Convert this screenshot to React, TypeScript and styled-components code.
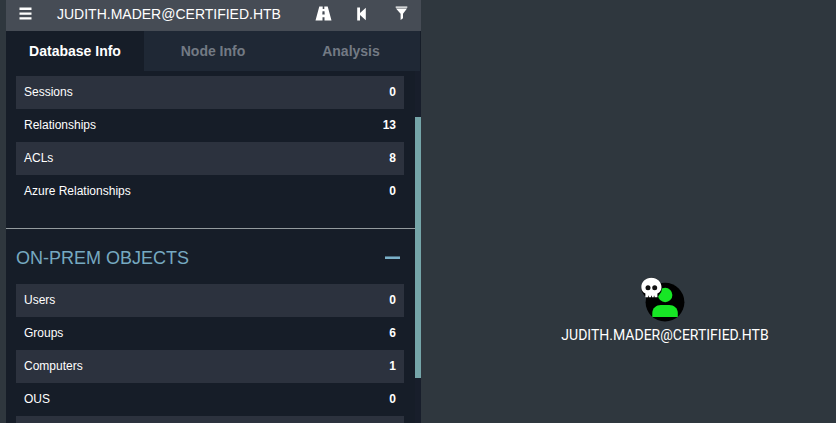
import React from "react";
import styled, { createGlobalStyle } from "styled-components";

const GlobalStyle = createGlobalStyle`
  * { box-sizing: border-box; }
  body {
    margin: 0;
    overflow: hidden;
    background: #2f373e;
    font-family: "Liberation Sans", Arial, sans-serif;
    color: #fff;
  }
`;

const Screen = styled.div`
  display: flex;
  width: 836px;
  height: 423px;
  padding-left: 6px;
  overflow: hidden;
  background: #2f373e;
`;

const Panel = styled.aside`
  display: flex;
  flex-direction: column;
  width: 415px;
  height: 423px;
  overflow: hidden;
  background: #161d28;
`;

const SearchBar = styled.header`
  display: flex;
  flex: none;
  align-items: center;
  height: 31px;
  padding: 0 13px 4px 13px;
  background: #464c55;
`;

const SearchText = styled.span`
  flex: 1;
  padding-left: 25px;
  font-size: 14px;
  line-height: 20px;
  white-space: nowrap;
`;

const Actions = styled.div`
  display: flex;
  align-items: center;
`;

const Icon = styled.svg<{ $gap?: number }>`
  display: block;
  flex: none;
  margin-left: ${(p) => p.$gap ?? 0}px;
  fill: #fff;
`;

const Tabs = styled.nav`
  display: grid;
  flex: none;
  grid-template-columns: repeat(3, 138px);
  height: 40px;
`;

const Tab = styled.div<{ $active?: boolean }>`
  display: flex;
  align-items: center;
  justify-content: center;
  font-size: 14px;
  font-weight: bold;
  color: ${(p) => (p.$active ? "#fff" : "#737a84")};
  background: ${(p) => (p.$active ? "#161d28" : "#1f2835")};
`;

const Body = styled.div`
  display: flex;
  flex: 1;
  min-height: 0;
`;

const Content = styled.div`
  flex: 1;
  padding-top: 5px;
  overflow: hidden;
`;

const Rows = styled.div`
  margin: 0 11px 0 10px;
`;

const Row = styled.div`
  display: flex;
  align-items: center;
  justify-content: space-between;
  height: 33px;
  padding: 0 8px 2px;
  font-size: 12px;
  &:nth-child(odd) { background: #2c323e; }
`;

const Count = styled.span`
  font-weight: bold;
`;

const Divider = styled.hr`
  height: 1px;
  margin: 20px 0 0;
  border: 0;
  background: #949b9e;
`;

const SectionHeader = styled.div`
  display: flex;
  align-items: center;
  justify-content: space-between;
  height: 55px;
  padding: 3px 15px 0 10px;
  font-size: 18px;
  color: #76a9c1;
`;

const Collapse = styled.span`
  width: 15px;
  height: 3px;
  margin-bottom: 2px;
  border-top: 1px solid #4a6c80;
  background: #7ab0c8;
`;

const ScrollTrack = styled.div`
  width: 6px;
  padding-top: 46px;
  background: #181e2b;
`;

const ScrollThumb = styled.div`
  height: 261px;
  background: #75a5a9;
`;

const Graph = styled.main`
  position: relative;
  flex: 1;
`;

const Node = styled.div`
  position: absolute;
  top: 276px;
  left: 140px;
  display: flex;
  flex-direction: column;
  align-items: center;
  width: 208px;
`;

const NodeLabel = styled.span`
  margin-top: 3px;
  font-family: Roboto, sans-serif;
  font-size: 14px;
  line-height: 20px;
  white-space: nowrap;
`;

const relations: [string, number][] = [
  ["Sessions", 0],
  ["Relationships", 13],
  ["ACLs", 8],
  ["Azure Relationships", 0],
];

const objects: [string, number][] = [
  ["Users", 0],
  ["Groups", 6],
  ["Computers", 1],
  ["OUS", 0],
];

const Stats = ({ items, more }: { items: [string, number][]; more?: boolean }) => (
  <Rows>
    {items.map(([name, count]) => (
      <Row key={name}>
        <span>{name}</span>
        <Count>{count}</Count>
      </Row>
    ))}
    {more && <Row />}
  </Rows>
);

export default function App() {
  return (
    <>
      <GlobalStyle />
      <Screen>
        <Panel>
          <SearchBar>
            <Icon width="13" height="13" viewBox="0 0 13 13">
              <path d="M.5.5h12v2.400H.5zM.5 5.400h12v2.400H.5zM.5 10.200h12v2.400H.5z" />
            </Icon>
            <SearchText>JUDITH.MADER@CERTIFIED.HTB</SearchText>
            <Actions>
              <Icon width="17" height="15" viewBox="0 0 17 15">
                <path
                  fillRule="evenodd"
                  d="M4.300.5H7.700V3h1.600V.5h3.400l3.800 14H9.500v-3.200h-2v3.200H.5zM7.500 5.200l-.2 3.300h2.400l-.2-3.300z"
                />
              </Icon>
              <Icon $gap={25} width="10" height="14" viewBox="0 0 10 14">
                <path d="M.2.5H3v5.400L8.800.8v12.400L3 8.100v5.400H.2z" />
              </Icon>
              <Icon $gap={28} width="13" height="15" viewBox="0 0 13 15">
                <path d="M.7.5h11.600v1.200H.7zM1 2.500h11L8 7.800v4.400l-2.400 1.900V7.800z" />
              </Icon>
            </Actions>
          </SearchBar>
          <Tabs>
            <Tab $active>Database Info</Tab>
            <Tab>Node Info</Tab>
            <Tab>Analysis</Tab>
          </Tabs>
          <Body>
            <Content>
              <Stats items={relations} />
              <Divider />
              <SectionHeader>
                <span>ON-PREM OBJECTS</span>
                <Collapse />
              </SectionHeader>
              <Stats items={objects} more />
            </Content>
            <ScrollTrack>
              <ScrollThumb />
            </ScrollTrack>
          </Body>
        </Panel>
        <Graph>
          <Node>
            <Icon width="48" height="46" viewBox="0 0 48 46">
              <circle cx="24" cy="26.200" r="19.400" fill="#000" />
              <circle cx="24.200" cy="19" r="7.200" fill="#17e625" />
              <path d="M11.300 41V37c0-5 4-8 8.500-8h8.500c4.500 0 8.500 3 8.500 8v4z" fill="#17e625" />
              <circle cx="10.600" cy="12" r="10.400" fill="#000" />
              <path d="M10.400 1.700C4.300 1.700.3 6 .3 11.200c0 2.800 1.500 5 4.100 6.300v3.700h2.900v-1.500h.7v1.500h2v-1.500h.8v1.500h2v-1.500h.7v1.500h2.900v-3.700c2.600-1.300 4.100-3.500 4.100-6.300 0-5.200-4-9.500-10.100-9.500z" />
              <circle cx="7" cy="11.800" r="2.500" fill="#111" />
              <circle cx="13.700" cy="11.800" r="2.500" fill="#111" />
            </Icon>
            <NodeLabel>JUDITH.MADER@CERTIFIED.HTB</NodeLabel>
          </Node>
        </Graph>
      </Screen>
    </>
  );
}
